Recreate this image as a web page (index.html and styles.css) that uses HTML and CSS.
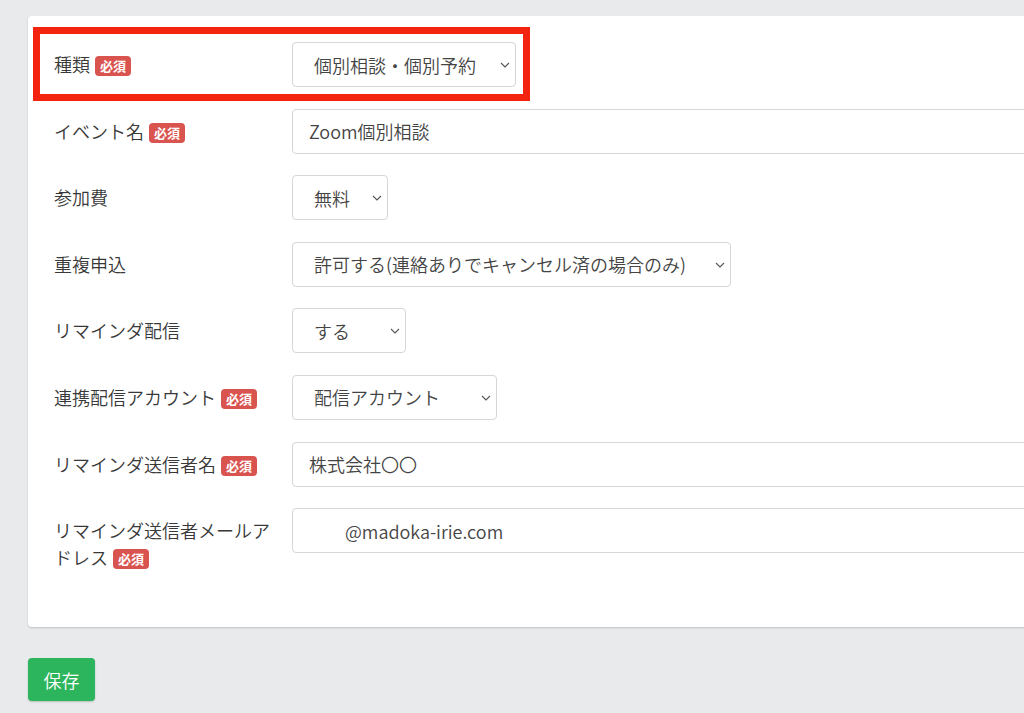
FILE: index.html
```html
<!DOCTYPE html>
<html lang="ja">
<head>
    <meta charset="UTF-8">
    <meta name="viewport" content="width=device-width, initial-scale=1.0">
    <title>イベント設定</title>
    <link rel="stylesheet" href="styles.css">
</head>
<body>
    <div class="page">
        <form class="card">
            <div class="highlight"></div>

            <div class="row">
                <label class="label">種類<span class="badge">必須</span></label>
                <div class="select-wrap select-kind">
                    <select class="field">
                        <option>個別相談・個別予約</option>
                    </select>
                    <svg class="chevron" viewBox="0 0 10 6"><path d="M1 1l4 4 4-4"/></svg>
                </div>
            </div>

            <div class="row">
                <label class="label">イベント名<span class="badge">必須</span></label>
                <input class="field text-field" type="text" value="Zoom個別相談">
            </div>

            <div class="row">
                <label class="label">参加費</label>
                <div class="select-wrap select-fee">
                    <select class="field">
                        <option>無料</option>
                    </select>
                    <svg class="chevron" viewBox="0 0 10 6"><path d="M1 1l4 4 4-4"/></svg>
                </div>
            </div>

            <div class="row">
                <label class="label">重複申込</label>
                <div class="select-wrap select-dup">
                    <select class="field">
                        <option>許可する(連絡ありでキャンセル済の場合のみ)</option>
                    </select>
                    <svg class="chevron" viewBox="0 0 10 6"><path d="M1 1l4 4 4-4"/></svg>
                </div>
            </div>

            <div class="row">
                <label class="label">リマインダ配信</label>
                <div class="select-wrap select-remind">
                    <select class="field">
                        <option>する</option>
                        <option>しない</option>
                    </select>
                    <svg class="chevron" viewBox="0 0 10 6"><path d="M1 1l4 4 4-4"/></svg>
                </div>
            </div>

            <div class="row">
                <label class="label">連携配信アカウント<span class="badge">必須</span></label>
                <div class="select-wrap select-account">
                    <select class="field">
                        <option>配信アカウント</option>
                    </select>
                    <svg class="chevron" viewBox="0 0 10 6"><path d="M1 1l4 4 4-4"/></svg>
                </div>
            </div>

            <div class="row">
                <label class="label">リマインダ送信者名<span class="badge">必須</span></label>
                <input class="field text-field" type="text" value="株式会社〇〇">
            </div>

            <div class="row">
                <label class="label">リマインダ送信者メールアドレス<span class="badge">必須</span></label>
                <input class="field text-field" type="text" value="　　@madoka-irie.com">
            </div>
        </form>

        <button class="btn-save" type="button">保存</button>
    </div>
</body>
</html>
```

FILE: styles.css
```css
html, body {
    margin: 0;
    padding: 0;
}

body {
    background-color: #e9eaec;
    font-family: "Noto Sans CJK JP", "Noto Sans", sans-serif;
    font-weight: 350;
    color: #333;
    overflow: hidden;
    height: 713px;
}

.page {
    width: 1100px;
    padding: 16px 0 0 28px;
}

.card {
    position: relative;
    background-color: #fff;
    border-radius: 4px;
    box-shadow: 0 1px 2px rgba(0, 0, 0, 0.18);
    padding: 26px 26px 56px 26px;
    display: flex;
    flex-direction: column;
    gap: 21.6px;
}

/* red annotation frame around the first row */
.highlight {
    position: absolute;
    left: 5px;
    top: 11px;
    width: 497px;
    height: 74px;
    box-sizing: border-box;
    border: 7px solid #f4230f;
    pointer-events: none;
}

.row {
    display: flex;
    align-items: flex-start;
}

.label {
    width: 222px;
    flex-shrink: 0;
    margin-right: 16px;
    padding-top: 9px;
    font-size: 18px;
    line-height: 27px;
    color: #383838;
}

.badge {
    display: inline-block;
    margin-left: 5px;
    padding: 0 5px;
    height: 20px;
    line-height: 20px;
    font-size: 13px;
    font-weight: bold;
    color: #fff;
    background-color: #d9534f;
    border-radius: 4px;
    vertical-align: 1px;
}

.field {
    box-sizing: border-box;
    height: 45px;
    border: 1px solid #d6d6d6;
    border-radius: 4px;
    background-color: #fff;
    font-family: "Noto Sans CJK JP", "Noto Sans", sans-serif;
    font-weight: 350;
    font-size: 18px;
    color: #444;
    outline: none;
    margin: 0;
}

.text-field {
    flex: 1;
    padding: 0 16px;
}

.select-wrap {
    position: relative;
}

.select-wrap .field {
    width: 100%;
    appearance: none;
    -webkit-appearance: none;
    padding: 0 36px 0 21px;
}

.chevron {
    position: absolute;
    right: 6px;
    top: 20px;
    width: 10px;
    height: 6px;
    fill: none;
    stroke: #555;
    stroke-width: 1.1;
    pointer-events: none;
}

.select-kind { width: 224px; }
.select-fee { width: 96px; }
.select-dup { width: 439px; }
.select-remind { width: 114px; }
.select-account { width: 205px; }

.btn-save {
    margin-top: 31px;
    width: 67px;
    height: 43px;
    border: none;
    border-radius: 4px;
    background-color: #2db55d;
    color: #fff;
    font-family: "Noto Sans CJK JP", "Noto Sans", sans-serif;
    font-weight: 350;
    font-size: 18px;
    box-shadow: 0 1px 2px rgba(0, 0, 0, 0.2);
    cursor: pointer;
}
```
